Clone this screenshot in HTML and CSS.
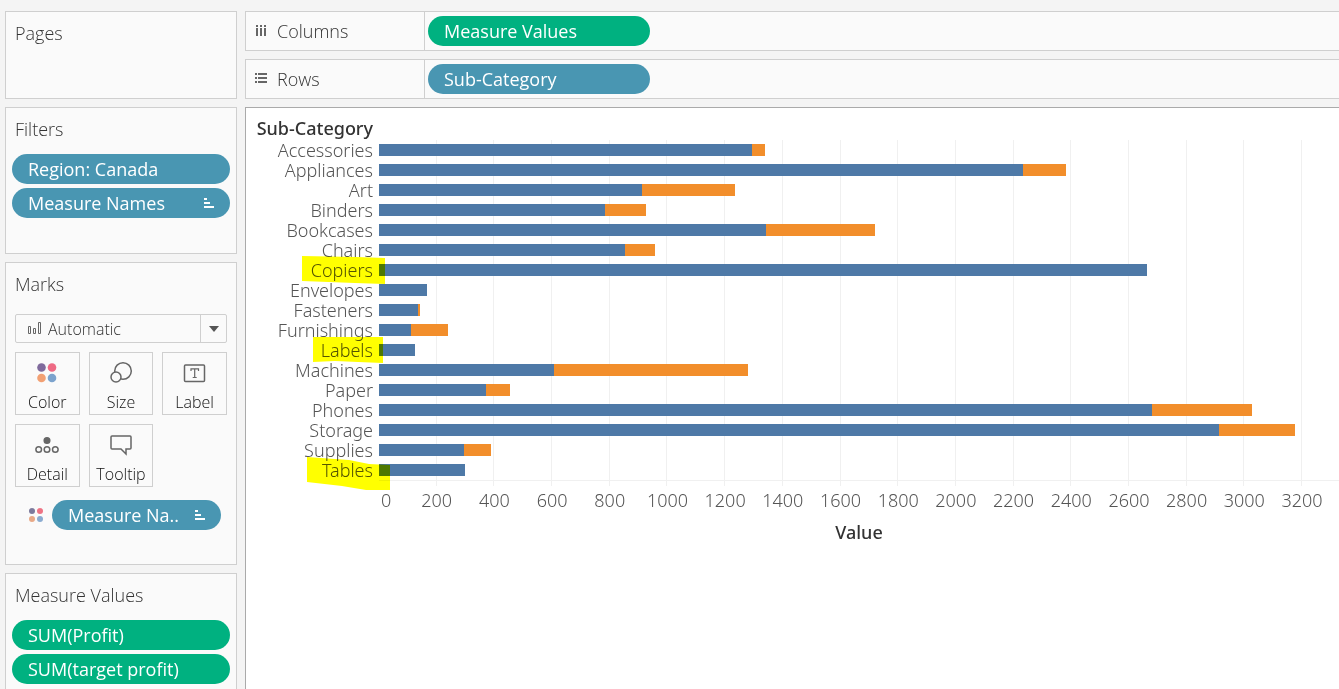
FILE: index.html
```html
<!DOCTYPE html>
<html lang="en">
<head>
  <meta charset="UTF-8">
  <meta name="viewport" content="width=device-width, initial-scale=1.0">
  <title>Profit by Sub-Category</title>

  <link rel="stylesheet" href="styles.css">
</head>
<body>
  <div class="workspace">
    <aside class="sidebar">
      <section class="card pages">
        <h2 class="card-title">Pages</h2>
      </section>

      <section class="card filters">
        <h2 class="card-title">Filters</h2>
        <div class="pills">
          <button class="pill blue">Region: Canada</button>
          <button class="pill blue">Measure Names
            <svg class="sort-icon" width="10" height="10" viewBox="0 0 10 10" aria-hidden="true"><path d="M0 1h3M0 5h6M0 9h10"/></svg>
          </button>
        </div>
      </section>

      <section class="card marks">
        <h2 class="card-title">Marks</h2>
        <div class="mark-type">
          <svg class="bars-icon" width="14" height="12" viewBox="0 0 14 12" aria-hidden="true"><path d="M.5 4.5h2v7h-2zM5.500 6.500h2v5h-2zM10.500.5h2v11h-2z"/></svg>
          <select aria-label="Mark type">
            <option>Automatic</option>
            <option>Bar</option>
            <option>Line</option>
          </select>
          <span class="arrow"></span>
        </div>
        <div class="mark-buttons">
          <button class="mark-button">
            <svg width="24" height="24" viewBox="0 0 24 24" aria-hidden="true">
              <circle cx="6.500" cy="6.500" r="4.300" fill="#7f6a9c"/><circle cx="17" cy="6.500" r="4.300" fill="#ee6a84"/>
              <circle cx="6.500" cy="17" r="4.300" fill="#f2a073"/><circle cx="17" cy="17" r="4.300" fill="#7ca3cd"/>
            </svg>
            Color
          </button>
          <button class="mark-button">
            <svg class="line-icon" width="24" height="24" viewBox="0 0 24 24" aria-hidden="true">
              <circle cx="14" cy="10" r="8.300"/><circle cx="7" cy="16" r="5" fill="#fafafa"/>
            </svg>
            Size
          </button>
          <button class="mark-button">
            <svg class="line-icon" width="24" height="24" viewBox="0 0 24 24" aria-hidden="true">
              <rect x="1.500" y="4" width="20" height="16.500" rx="1"/>
              <path stroke-width="1.200" d="M8 10V7.800h7.500V10M11.700 7.800v8.700M9.700 16.500h4"/>
            </svg>
            Label
          </button>
          <button class="mark-button">
            <svg class="line-icon" width="24" height="24" viewBox="0 0 24 24" aria-hidden="true">
              <circle cx="12" cy="7.500" r="2.800" fill="#666"/>
              <circle cx="3.700" cy="16.500" r="2.800"/><circle cx="12" cy="16.500" r="2.800"/><circle cx="20.300" cy="16.500" r="2.800"/>
            </svg>
            Detail
          </button>
          <button class="mark-button">
            <svg class="line-icon" width="24" height="24" viewBox="0 0 24 24" aria-hidden="true">
              <path d="M3 3h18a1 1 0 0 1 1 1v11a1 1 0 0 1-1 1h-4v5l-5-5H3a1 1 0 0 1-1-1V4a1 1 0 0 1 1-1z"/>
            </svg>
            Tooltip
          </button>
        </div>
        <div class="encoding">
          <svg width="14" height="14" viewBox="0 0 14 14" aria-hidden="true">
            <circle cx="3" cy="3" r="3" fill="#7c7a9c"/><circle cx="11" cy="3" r="3" fill="#ee7384"/>
            <circle cx="3" cy="11" r="3" fill="#e8a987"/><circle cx="11" cy="11" r="3" fill="#8aabd0"/>
          </svg>
          <button class="pill blue">Measure Na..
            <svg class="sort-icon" width="10" height="10" viewBox="0 0 10 10" aria-hidden="true"><path d="M0 1h3M0 5h6M0 9h10"/></svg>
          </button>
        </div>
      </section>

      <section class="card values">
        <h2 class="card-title">Measure Values</h2>
        <div class="pills">
          <button class="pill green">SUM(Profit)</button>
          <button class="pill green">SUM(target profit)</button>
        </div>
      </section>
    </aside>

    <main class="content">
      <div class="shelf">
        <div class="shelf-name">
          <svg width="14" height="14" viewBox="0 0 14 14" aria-hidden="true"><path d="M3 1v2M7 1v2M11 1v2M3 4v8M7 4v8M11 4v8"/></svg>
          Columns
        </div>
        <button class="pill green">Measure Values</button>
      </div>
      <div class="shelf">
        <div class="shelf-name">
          <svg width="14" height="14" viewBox="0 0 14 14" aria-hidden="true"><path d="M1 2h2M1 6h2M1 10h2M4 2h9M4 6h9M4 10h9"/></svg>
          Rows
        </div>
        <button class="pill blue">Sub-Category</button>
      </div>

      <section class="view">
        <h3 class="row-header">Sub-Category</h3>
        <div class="chart">
          <div class="grid-lines"></div>
          <div class="rows"></div>
          <!-- highlighter strokes over Copiers, Labels and Tables -->
          <svg class="highlights" width="160" height="360" viewBox="0 0 160 360" aria-hidden="true">
            <path d="M56 116l55 1 28 1v26l-30-1-53-2z"/>
            <path d="M67 197h70v26l-25-1-23-1-22 1z"/>
            <path d="M61 317l42 3 20 4 21 1v25h-24l-24-4-35-4z"/>
          </svg>
        </div>
        <div class="axis">
          <div class="ticks"></div>
          <div class="axis-title">Value</div>
        </div>
      </section>
    </main>
  </div>

  <script>
    const axisMax = 3328;
    const step = 200;

    // name, profit, remainder up to target profit
    const data = [
      ['Accessories', 1293, 45],
      ['Appliances', 2233, 149],
      ['Art', 912, 322],
      ['Binders', 783, 143],
      ['Bookcases', 1342, 377],
      ['Chairs', 853, 104],
      ['Copiers', 2662, 0],
      ['Envelopes', 166, 0],
      ['Fasteners', 135, 7],
      ['Furnishings', 111, 128],
      ['Labels', 125, 0],
      ['Machines', 607, 672],
      ['Paper', 371, 83],
      ['Phones', 2680, 346],
      ['Storage', 2912, 264],
      ['Supplies', 295, 93],
      ['Tables', 298, 0]
    ];

    const percent = value => (value / axisMax * 100) + '%';

    document.querySelector('.rows').innerHTML = data.map(([name, profit, target]) => `
      <div class="row">
        <span class="row-name">${name}</span>
        <div class="bar">
          <div class="profit" style="width: ${percent(profit)}"></div>
          <div class="target" style="width: ${percent(target)}"></div>
        </div>
      </div>`).join('');

    let lines = '';
    let ticks = `<span class="zero" style="width: ${percent(step / 2)}">0</span>`;
    for (let value = step; value < axisMax; value += step) {
      lines += `<span style="width: ${percent(step)}"></span>`;
      ticks += `<span style="width: ${percent(step)}">${value}</span>`;
    }
    document.querySelector('.grid-lines').innerHTML = lines;
    document.querySelector('.ticks').innerHTML = ticks;
  </script>
</body>
</html>
```
FILE: styles.css
```css
* {
  margin: 0;
  padding: 0;
  box-sizing: border-box;
}

body {
  background-color: #f4f4f4;
  font-family: 'Open Sans', 'Noto Sans', sans-serif;
  font-size: 18px;
  line-height: 24px;
  color: #333;
}

button,
select {
  font: inherit;
  color: inherit;
}

.workspace {
  display: flex;
  gap: 8px;
  height: 100vh;
  padding: 11px 0 0 5px;
  overflow: hidden;
}

/* Left side cards */
.sidebar {
  display: flex;
  flex-direction: column;
  flex: 0 0 232px;
  gap: 8px;
}

.card {
  flex-shrink: 0;
  padding: 9px 6px;
  background-color: #fafafa;
  border: 1px solid #cfcfcf;
}

.card-title {
  margin: 0 3px 13px;
  font-size: 18px;
  font-weight: 300;
}

.pages {
  min-height: 88px;
}

.filters {
  padding-bottom: 35px;
}

/* Pills */
.pills {
  display: flex;
  flex-direction: column;
  gap: 4px;
}

.pill {
  display: flex;
  justify-content: space-between;
  align-items: center;
  height: 30px;
  padding: 0 16px;
  border: none;
  border-radius: 15px;
  color: #fff;
  font-weight: 500;
  white-space: nowrap;
  cursor: pointer;
}

.blue {
  background-color: #4996b2;
}

.green {
  background-color: #00b180;
}

.sort-icon {
  stroke: #fff;
  stroke-width: 2;
}

/* Marks card */
.marks {
  padding-bottom: 34px;
}

.marks .card-title {
  margin-bottom: 18px;
}

.mark-type {
  position: relative;
  margin: 0 3px 9px;
}

.mark-type select {
  display: block;
  width: 100%;
  height: 29px;
  padding-left: 32px;
  appearance: none;
  background-color: #fafafa;
  border: 1px solid #cfcfcf;
  border-radius: 2px;
  font-size: 16px;
  font-weight: 300;
}

.bars-icon {
  position: absolute;
  top: 8px;
  left: 13px;
  fill: none;
  stroke: #666;
}

.arrow {
  position: absolute;
  top: 1px;
  right: 1px;
  display: flex;
  justify-content: center;
  align-items: center;
  width: 26px;
  height: 27px;
  border-left: 1px solid #cfcfcf;
  pointer-events: none;
}

.arrow::before {
  content: '';
  border: 5px solid transparent;
  border-top: 6px solid #555;
  border-bottom: none;
}

.mark-buttons {
  display: grid;
  grid-template-columns: repeat(3, 1fr);
  gap: 9px;
  margin: 0 3px 13px;
}

.mark-button {
  display: flex;
  flex-direction: column;
  align-items: center;
  gap: 5px;
  min-width: 0;
  height: 63px;
  padding-top: 8px;
  background-color: #fafafa;
  border: 1px solid #cfcfcf;
  color: #111;
  font-size: 16px;
  font-weight: 300;
  cursor: pointer;
}

.mark-button svg {
  flex-shrink: 0;
}

.line-icon {
  fill: none;
  stroke: #666;
  stroke-width: 1.5;
}

.encoding {
  display: flex;
  align-items: center;
  gap: 9px;
  padding: 0 9px 0 17px;
}

.encoding .pill {
  flex: 1;
}

/* Shelves */
.content {
  display: flex;
  flex-direction: column;
  flex: 1;
  gap: 8px;
  min-width: 0;
}

.shelf {
  display: flex;
  align-items: center;
  height: 40px;
  background-color: #fafafa;
  border: 1px solid #cfcfcf;
  border-right: none;
}

.shelf-name {
  display: flex;
  align-items: center;
  gap: 9px;
  width: 179px;
  height: 100%;
  padding-left: 8px;
  border-right: 1px solid #cfcfcf;
  font-weight: 300;
}

.shelf-name svg {
  stroke: #666;
  stroke-width: 2;
}

.shelf .pill {
  width: 222px;
  margin-left: 3px;
}

/* Chart */
.view {
  flex: 1;
  padding-top: 8px;
  background-color: #fff;
  border-top: 1px solid #aaa;
  border-left: 1px solid #aaa;
  font-family: 'Noto Sans', 'Open Sans', sans-serif;
}

.row-header {
  width: 133px;
  padding-right: 6px;
  font-size: 18px;
  font-weight: 500;
  text-align: right;
}

.chart {
  position: relative;
}

.grid-lines {
  position: absolute;
  top: 0;
  right: 0;
  bottom: -6px;
  left: 133px;
  display: flex;
}

.grid-lines span {
  border-right: 1px solid #f0f0f0;
}

.rows {
  position: relative;
}

.row {
  display: grid;
  grid-template-columns: 133px 1fr;
  align-items: center;
  height: 20px;
  line-height: 20px;
}

.row-name {
  padding-right: 6px;
  color: #555;
  font-weight: 300;
  text-align: right;
}

.bar {
  display: flex;
  height: 12px;
}

.profit {
  background-color: #4e79a7;
}

.target {
  background-color: #f28e2b;
}

.highlights {
  position: absolute;
  top: 0;
  left: 0;
  fill: #ff0;
  mix-blend-mode: multiply;
  pointer-events: none;
}

.axis {
  margin-left: 133px;
  border-top: 1px solid #f0f0f0;
}

.ticks {
  display: flex;
  padding: 7px 0 8px;
  color: #555;
  font-weight: 300;
  text-align: center;
}

.ticks .zero {
  padding-left: 2px;
  text-align: left;
}

.axis-title {
  font-weight: 500;
  text-align: center;
}
```
